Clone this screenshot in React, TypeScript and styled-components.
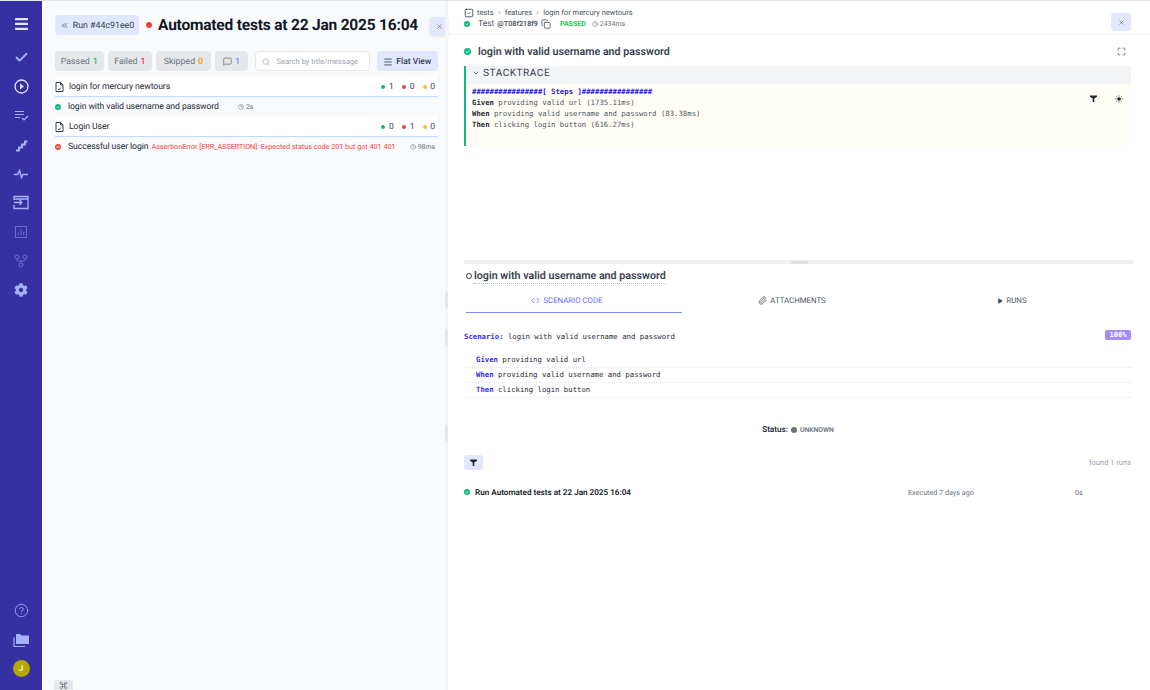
import React from 'react';
import styled, { createGlobalStyle } from 'styled-components';
import { FaCog } from 'react-icons/fa';
import { Check, ChevronRight, ChevronDown, ChevronsLeft, X, Search, Menu, MessageSquare, Clock, SquareCheck, Copy, Paperclip, Play, Code, Maximize, Sun, HelpCircle, GitFork, Command } from 'lucide-react';

const Global = createGlobalStyle`
  html, body { margin: 0; padding: 0; height: 690px; overflow: hidden; background: #fff; }
  body { font-family: Roboto, "Liberation Sans", sans-serif; color: #1f2937; text-rendering: geometricPrecision; }
  * { box-sizing: border-box; }
  svg { flex: none; }
`;
const Page = styled.div`display: flex; width: 1150px; height: 690px; border-top: 1px solid #e5e7eb; overflow: hidden;`;
const Sidebar = styled.nav`width: 42px; flex: none; background: #3730a3; display: flex; flex-direction: column; align-items: center; padding: 13px 0 7px; color: #a5b4fc;`;
const NavGroup = styled.div`display: flex; flex-direction: column; align-items: center;`;
const NavItem = styled.div<{ $dim?: boolean; $white?: boolean }>`
  width: 42px; height: 29px; display: flex; align-items: center; justify-content: center;
  color: ${p => p.$white ? '#e0e7ff' : '#a5b4fc'}; opacity: ${p => p.$dim ? .5 : 1};
`;
const Burger = styled(NavItem)`height: 20px; margin-bottom: 9px; color: #e0e7ff;`;
const Spring = styled.div`flex: 1;`;
const Avatar = styled.div`width: 17px; height: 17px; border-radius: 50%; background: #b5a800; color: #fff; font-size: 8px; font-weight: 600; display: flex; align-items: center; justify-content: center;`;

const Left = styled.section`width: 403px; flex: none; background: #f9fafb; padding: 14px 7px 0 13px; position: relative;`;
const HeaderRow = styled.div`display: flex; align-items: center; height: 20px;`;
const RunBtn = styled.div`width: 84px; flex: none; height: 20px; padding-top: 1px; border-radius: 4px; background: #e0e7ff; display: flex; align-items: center; justify-content: center; gap: 4px; font-size: 8.8px; color: #374151; white-space: nowrap;`;
const Dot = styled.span<{ $c: string; $s?: number }>`display: inline-block; flex: none; width: ${p => p.$s ?? 4}px; height: ${p => p.$s ?? 4}px; border-radius: 50%; background: ${p => p.$c};`;
const RedStatus = styled(Dot)`margin: 0 6px 0 7px;`;
const Title = styled.h1`margin: 0; font-size: 15.5px; letter-spacing: -.2px; font-weight: 700; color: #111827; white-space: nowrap;`;
const CloseTab = styled.div`position: absolute; left: 388px; top: 16px; width: 18px; height: 18px; background: #e0e7ff; border-radius: 3px 0 0 3px; box-shadow: 0 1px 3px rgba(0,0,0,.12); display: flex; align-items: center; justify-content: center; color: #4b5563;`;
const FilterBar = styled.div`display: flex; align-items: center; margin-top: 16px; height: 20px;`;
const Chip = styled.div<{ $w: number; $mr: number }>`width: ${p => p.$w}px; margin-right: ${p => p.$mr}px; height: 20px; padding-top: 1px; border-radius: 4px; background: #e5e7eb; color: #6b7280; font-size: 8.8px; display: flex; align-items: center; justify-content: center; gap: 3px;`;
const Num = styled.span<{ $c: string }>`color: ${p => p.$c}; font-weight: 500;`;
const SearchBox = styled.div`width: 115px; height: 20px; margin-right: 7px; border: 1px solid #e5e7eb; border-radius: 4px; background: #fff; display: flex; align-items: center; padding: 1px 0 0 6px; gap: 6px; font-size: 7.6px; color: #9ca3af; white-space: nowrap;`;
const FlatBtn = styled.div`width: 62px; height: 20px; padding-top: 1px; border-radius: 4px; background: #e0e7ff; color: #374151; font-size: 8.5px; font-weight: 500; display: flex; align-items: center; justify-content: center; gap: 3px;`;
const List = styled.div`margin-top: 5px; width: 383px;`;
const Suite = styled.div`height: 21px; padding: 1px 3px 0 0; background: #fff; border-bottom: 1px solid #bfdbfe; display: flex; align-items: center; font-size: 8.7px; letter-spacing: -.1px; color: #1f2937; gap: 5px;`;
const Grow = styled.span`flex: 1;`;
const Counts = styled.div`display: flex; align-items: center; gap: 3.5px; font-size: 8.5px; color: #374151;`;
const Count = styled.span`margin-right: 5px; &:last-child { margin-right: 0; }`;
const TestRow = styled.div`height: 19px; display: flex; align-items: center; font-size: 8.7px; letter-spacing: -.1px; color: #1f2937; white-space: nowrap;`;
const RowIcon = styled.span`display: inline-flex; margin-right: 7px;`;
const ErrorMsg = styled.span`font-size: 7.2px; letter-spacing: 0; color: #ef4444; margin-left: 3px;`;
const Time = styled.span<{ $ml?: number }>`display: inline-flex; align-items: center; gap: 2px; font-size: 7px; color: #6b7280; margin-left: ${p => p.$ml ?? 0}px;`;
const TimeEnd = styled(Time)`margin-right: 3px;`;
const CmdKey = styled.div`position: absolute; left: 12px; bottom: 0; width: 19px; height: 10px; background: #e5e7eb; border-radius: 3px 3px 0 0; display: flex; justify-content: center; padding-top: 1px; color: #374151;`;

const Gutter = styled.div`width: 3px; flex: none; background: #f3f4f6; position: relative;`;
const GutterMark = styled.span<{ $top: number }>`position: absolute; left: 0; top: ${p => p.$top}px; width: 3px; height: 16px; background: #e5e7eb;`;

const Right = styled.main`flex: 1; min-width: 0; background: #fff; display: flex; flex-direction: column;`;
const TopBar = styled.header`height: 34px; flex: none; border-bottom: 2px solid #f9fafb; padding: 6px 19px 0 16px; display: flex; justify-content: space-between;`;
const Crumbs = styled.div`display: flex; align-items: center; gap: 3px; height: 11px; font-size: 7.5px; color: #4b5563;`;
const CrumbIcon = styled.span`display: inline-flex; color: #374151;`;
const TestLine = styled.div`display: flex; align-items: center; height: 11px; font-size: 8.5px; color: #4b5563; gap: 3px;`;
const TestLabel = styled.span`margin-left: 5px;`;
const Hash = styled.b`font-weight: 600; font-size: 7.2px;`;
const Passed = styled.span`color: #22c55e; font-weight: 700; font-size: 7px; margin-left: 6px;`;
const IconBtn = styled.div`width: 20px; height: 18px; border-radius: 3px; background: #e0e7ff; display: flex; align-items: center; justify-content: center; color: #4b5563; margin-top: 6px;`;
const Body = styled.div`padding: 0 19px 0 16px;`;
const SubHead = styled.div`display: flex; align-items: center; height: 31px; padding: 2px 5px 0 0; gap: 7px;`;
const SubTitle = styled.h2`margin: 0; font-size: 10.7px; font-weight: 600; color: #374151;`;
const Stack = styled.div`border-left: 2px solid #10b981; height: 80px;`;
const StackHead = styled.div`height: 18px; background: #f3f4f6; display: flex; align-items: center; gap: 3px; padding: 0 0 4px 6px; font-size: 10.1px; letter-spacing: .5px; color: #374151;`;
const StackBody = styled.div`height: 62px; background: #fffdf5; padding: 2px 6px; font-family: "DejaVu Sans Mono", monospace; font-size: 7.3px; line-height: 11px; color: #4b5563; display: flex; justify-content: space-between;`;
const Kw = styled.b`color: #1f2937; font-weight: 700;`;
const Steps = styled.div`color: #1e1bd6; font-weight: 700;`;
const Tools = styled.div`display: flex; gap: 18px; padding: 9px 2px 0 0; color: #1f2937;`;
const Split = styled.div`margin: 114px 0 0 16px; width: 670px; height: 4px; flex: none; background: #f0f0f0; display: flex; justify-content: center; align-items: center;`;
const Handle = styled.span`width: 17px; height: 3px; background: #e2e2e2;`;
const ScenarioHead = styled.div`display: flex; align-items: center; gap: 2px; padding-left: 2px; height: 24px;`;
const Ring = styled.span`width: 6px; height: 6px; border: 1px solid #374151; border-radius: 50%;`;
const Dotted = styled.h2`margin: 0; font-size: 10.7px; font-weight: 600; color: #374151; border-bottom: 1px dotted #a5b4fc; padding-bottom: 1px;`;
const Tabs = styled.div`display: grid; grid-template-columns: 216px 220px 220px; margin: 5px 0 0 2px; height: 20px; width: 660px;`;
const Tab = styled.div<{ $on?: boolean }>`display: flex; align-items: center; justify-content: center; gap: 3px; font-size: 7.8px; padding: 0 ${p => p.$on ? 14 : 0}px 4px 0; color: ${p => p.$on ? '#6366f1' : '#4b5563'}; border-bottom: 1px solid ${p => p.$on ? '#818cf8' : 'transparent'};`;
const Code1 = styled.div`font-family: "DejaVu Sans Mono", monospace; font-size: 7.3px; color: #1f2937; display: flex; justify-content: space-between; align-items: center; height: 12px; margin-top: 17px;`;
const Blue = styled.b`color: #2e2bf0; font-weight: 600;`;
const Badge = styled.span`align-self: flex-start; width: 26px; height: 10px; background: #a78bfa; border-radius: 2px; color: #fff; font-size: 7px; font-weight: 700; text-align: center; line-height: 10px;`;
const StepList = styled.div`margin-top: 11px;`;
const StepLine = styled.div`height: 15px; padding-left: 12px; border-bottom: 1px dotted #e5e7eb; font-family: "DejaVu Sans Mono", monospace; font-size: 7.3px; line-height: 14px; color: #1f2937;`;
const StatusLine = styled.div`margin-top: 25px; height: 14px; display: flex; align-items: center; justify-content: center; gap: 3px; font-size: 8.2px; font-weight: 500; color: #111827; padding-left: 1px;`;
const Unknown = styled.span`font-size: 6.8px; font-weight: 600; color: #6b7280;`;
const RunsBar = styled.div`margin-top: 18px; display: flex; justify-content: space-between; align-items: center; height: 15px;`;
const FilterBtn = styled.div`width: 19px; height: 15px; border-radius: 3px; background: #e0e7ff; display: flex; align-items: center; justify-content: center; color: #1f2937;`;
const Found = styled.span`font-size: 7.5px; color: #9ca3af;`;
const RunRow = styled.div`margin-top: 15px; height: 14px; display: grid; grid-template-columns: 444px 167px 1fr; align-items: center; font-size: 7.2px; color: #6b7280;`;
const RunName = styled.div`display: flex; align-items: center; gap: 5px; font-size: 8.15px; font-weight: 600; color: #111827;`;

const Ok = ({ s = 6 }: { s?: number }) => (
  <svg width={s} height={s} viewBox="0 0 10 10"><circle cx="5" cy="5" r="5" fill="#10b981" /><path d="M2.8 5.2l1.6 1.500 2.900-3" stroke="#fff" strokeWidth="1.200" fill="none" /></svg>
);
const Bad = () => (
  <svg width="6" height="6" viewBox="0 0 10 10"><circle cx="5" cy="5" r="5" fill="#ef4444" /><rect x="2.300" y="4.200" width="5.400" height="1.600" fill="#fff" /></svg>
);
const Bars = () => (
  <svg width="13" height="12" viewBox="0 0 13 12" fill="currentColor"><rect width="13" height="2.300" rx=".5" /><rect y="4.800" width="13" height="2.300" rx=".5" /><rect y="9.700" width="13" height="2.300" rx=".5" /></svg>
);
const Stairs = () => (
  <svg width="14" height="14" viewBox="0 0 14 14" fill="none" stroke="currentColor" strokeWidth="2"><path d="M2 12.500h3v-3h3v-3h3v-3h2.500" /></svg>
);
const ListCheck = () => (
  <svg width="15" height="15" viewBox="0 0 15 15" fill="none" stroke="currentColor" strokeWidth="1.200"><path d="M1 3.500h9M1 6.500h9M1 9.500h5M8 10l2 2 4-4" /></svg>
);
const Pulse = () => (
  <svg width="14" height="10" viewBox="0 0 14 10" fill="none" stroke="currentColor" strokeWidth="1.400"><path d="M0 5.500h3.500L5.500 1.500l2 7 1.500-3h5" /></svg>
);
const ImportBox = () => (
  <svg width="16" height="15" viewBox="0 0 16 15" fill="none" stroke="currentColor" strokeWidth="1.300"><path d="M1 5V1.500h14v12H1V10M1 4h14M1 7.500h8M6.500 5L9 7.500 6.500 10" /></svg>
);
const ChartBox = () => (
  <svg width="12" height="12" viewBox="0 0 13 13" fill="none" stroke="currentColor" strokeWidth="1"><rect x=".5" y=".5" width="12" height="12" /><path d="M3.500 10V7M6.500 10V3.500M9.500 10V6" /></svg>
);
const FolderStack = () => (
  <svg width="16" height="14" viewBox="0 0 16 14"><path d="M1 4.500v9h11" fill="none" stroke="currentColor" strokeWidth="1.200" /><path d="M3 1h4l1.500 1.500H16V11H3z" fill="currentColor" /></svg>
);
const Doc = () => (
  <svg width="9" height="10" viewBox="0 0 9 10" fill="none" stroke="#1f2937" strokeWidth=".9"><path d="M1 .5h4.500L8 3v6.500H1zM5.500.5V3H8" /><path d="M3 7.200l1 .6L6 5.500" /></svg>
);
const Funnel = () => (
  <svg width="7" height="7" viewBox="0 0 7 7" fill="currentColor"><path d="M0 .5h7v1.200L4.300 3.600V7H2.700V3.600L0 1.700z" /></svg>
);

export default function App() {
  return (
    <Page>
      <Global />
      <Sidebar>
        <Burger><Bars /></Burger>
        <NavGroup>
          <NavItem><Check size={15} strokeWidth={3} /></NavItem>
          <NavItem $white><svg width="15" height="15" viewBox="0 0 15 15"><circle cx="7.500" cy="7.500" r="6.500" fill="none" stroke="currentColor" strokeWidth="1.300" /><path d="M6 4.500l4 3-4 3z" fill="currentColor" /></svg></NavItem>
          <NavItem><ListCheck /></NavItem>
          <NavItem><Stairs /></NavItem>
          <NavItem><Pulse /></NavItem>
          <NavItem><ImportBox /></NavItem>
          <NavItem $dim><ChartBox /></NavItem>
          <NavItem $dim><GitFork size={16} strokeWidth={1.300} /></NavItem>
          <NavItem><FaCog size={14} /></NavItem>
        </NavGroup>
        <Spring />
        <NavGroup>
          <NavItem><HelpCircle size={15} strokeWidth={1.300} /></NavItem>
          <NavItem><FolderStack /></NavItem>
          <NavItem><Avatar>J</Avatar></NavItem>
        </NavGroup>
      </Sidebar>

      <Left>
        <HeaderRow>
          <RunBtn><ChevronsLeft size={9} />Run #44c91ee0</RunBtn>
          <RedStatus $c="#ef4444" $s={6} />
          <Title>Automated tests at 22 Jan 2025 16:04</Title>
        </HeaderRow>
        <CloseTab><X size={7} /></CloseTab>
        <FilterBar>
          <Chip $w={49} $mr={4}>Passed <Num $c="#10b981">1</Num></Chip>
          <Chip $w={45} $mr={4}>Failed <Num $c="#ef4444">1</Num></Chip>
          <Chip $w={55} $mr={4}>Skipped <Num $c="#f59e0b">0</Num></Chip>
          <Chip $w={34} $mr={7}><MessageSquare size={9} /> <Num $c="#818cf8">1</Num></Chip>
          <SearchBox><Search size={8} />Search by title/message</SearchBox>
          <FlatBtn><Menu size={10} />Flat View</FlatBtn>
        </FilterBar>
        <List>
          <Suite><Doc />login for mercury newtours<Grow />
            <Counts><Dot $c="#10b981" /><Count>1</Count><Dot $c="#ef4444" /><Count>0</Count><Dot $c="#fbbf24" /><Count>0</Count></Counts>
          </Suite>
          <TestRow><RowIcon><Ok /></RowIcon>login with valid username and password<Time $ml={19}><Clock size={6} />2s</Time></TestRow>
          <Suite><Doc />Login User<Grow />
            <Counts><Dot $c="#10b981" /><Count>0</Count><Dot $c="#ef4444" /><Count>1</Count><Dot $c="#fbbf24" /><Count>0</Count></Counts>
          </Suite>
          <TestRow><RowIcon><Bad /></RowIcon>Successful user login<ErrorMsg>AssertionError [ERR_ASSERTION]: Expected status code 201 but got 401 401</ErrorMsg><Grow /><TimeEnd><Clock size={6} />98ms</TimeEnd></TestRow>
        </List>
        <CmdKey><Command size={9} strokeWidth={1.300} /></CmdKey>
      </Left>
      <Gutter><GutterMark $top={291} /><GutterMark $top={328} /><GutterMark $top={424} /></Gutter>

      <Right>
        <TopBar>
          <div>
            <Crumbs><CrumbIcon><SquareCheck size={10} /></CrumbIcon>tests<ChevronRight size={5} />features<ChevronRight size={5} />login for mercury newtours</Crumbs>
            <TestLine><Ok /><TestLabel>Test</TestLabel> <Hash>@T08f218f9</Hash><Copy size={10} /><Passed>PASSED</Passed><Time $ml={3}><Clock size={6} />2434ms</Time></TestLine>
          </div>
          <IconBtn><X size={7} /></IconBtn>
        </TopBar>
        <Body>
          <SubHead><Ok s={7} /><SubTitle>login with valid username and password</SubTitle><Grow /><Maximize size={9} color="#4b5563" /></SubHead>
          <Stack>
            <StackHead><ChevronDown size={8} />STACKTRACE</StackHead>
            <StackBody>
              <div>
                <Steps>################[ Steps ]################</Steps>
                <div><Kw>Given</Kw> providing valid url (1735.11ms)</div>
                <div><Kw>When</Kw> providing valid username and password (83.38ms)</div>
                <div><Kw>Then</Kw> clicking login button (616.27ms)</div>
              </div>
              <Tools><Funnel /><Sun size={8} fill="currentColor" /></Tools>
            </StackBody>
          </Stack>
        </Body>
        <Split><Handle /></Split>
        <Body>
          <ScenarioHead><Ring /><Dotted>login with valid username and password</Dotted></ScenarioHead>
          <Tabs>
            <Tab $on><Code size={9} />SCENARIO CODE</Tab>
            <Tab><Paperclip size={9} />ATTACHMENTS</Tab>
            <Tab><Play size={6} fill="currentColor" />RUNS</Tab>
          </Tabs>
          <Code1><span><Blue>Scenario:</Blue> login with valid username and password</span><Badge>100%</Badge></Code1>
          <StepList>
            <StepLine><Blue>Given</Blue> providing valid url</StepLine>
            <StepLine><Blue>When</Blue> providing valid username and password</StepLine>
            <StepLine><Blue>Then</Blue> clicking login button</StepLine>
          </StepList>
          <StatusLine>Status: <Dot $c="#6b7280" $s={6} /> <Unknown>UNKNOWN</Unknown></StatusLine>
          <RunsBar><FilterBtn><Funnel /></FilterBtn><Found>found 1 runs</Found></RunsBar>
          <RunRow><RunName><Ok />Run Automated tests at 22 Jan 2025 16:04</RunName><span>Executed 7 days ago</span><span>0s</span></RunRow>
        </Body>
      </Right>
    </Page>
  );
}
